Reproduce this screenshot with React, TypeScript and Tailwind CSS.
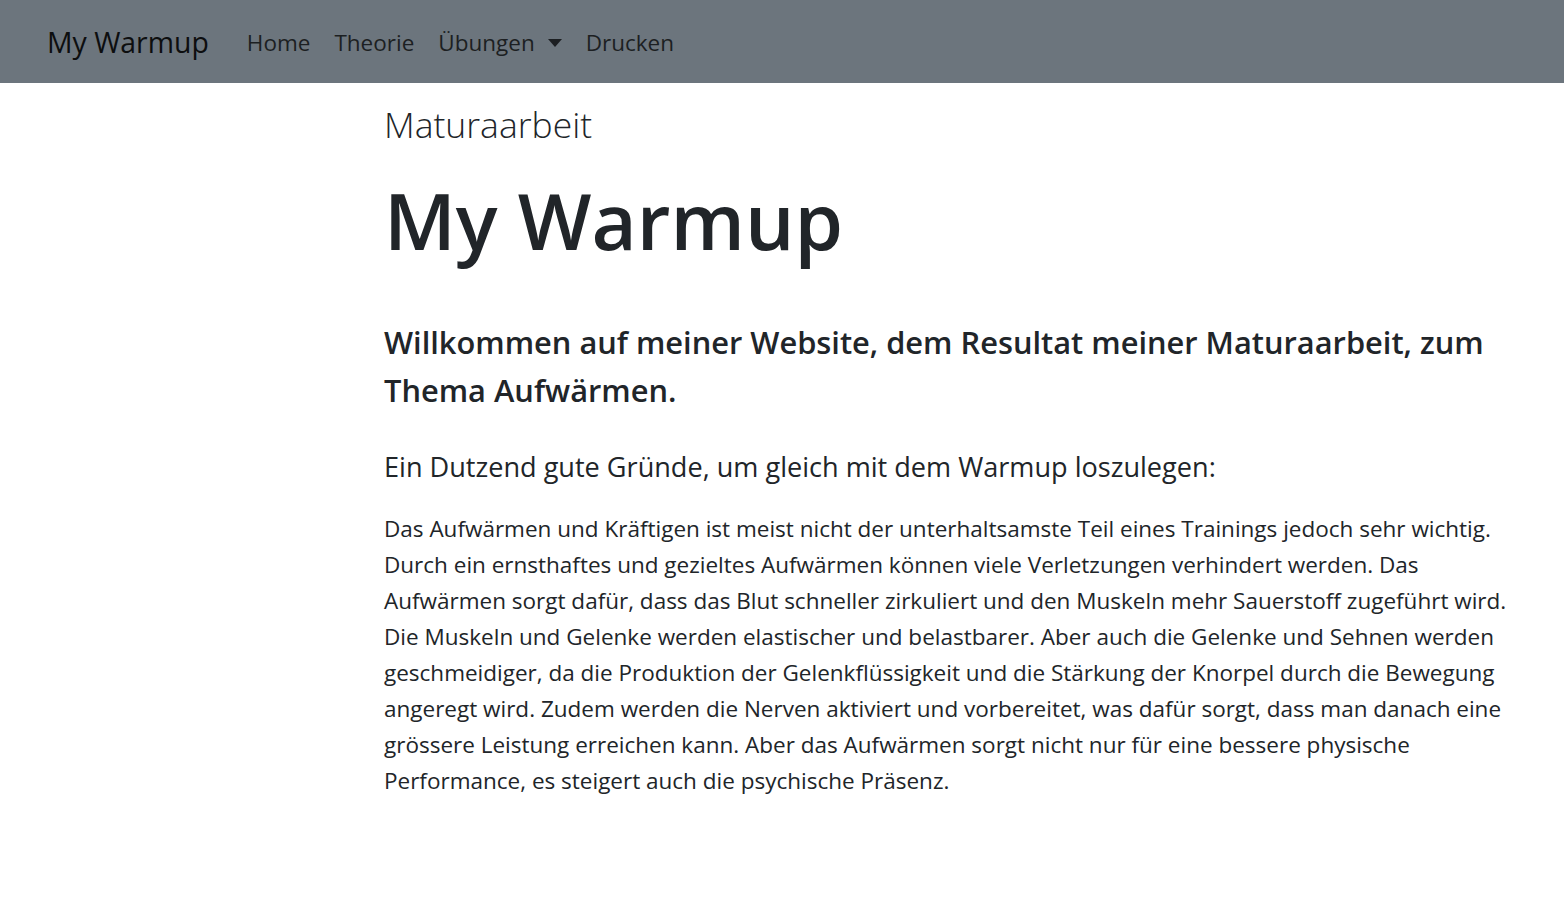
export default function App() {
  return (
    <div className="min-h-[906px] bg-white text-[#212529] font-['Open_Sans',sans-serif]">
      <nav className="flex h-[83px] items-center bg-[#6c757d] pl-[47px]">
        <a href="#" className="mr-[26px] mt-[2px] text-[28.4px] leading-none text-[#0d0e0f]">
          My Warmup
        </a>
        <ul className="mt-[2px] flex items-center text-[22.5px] text-[#1c1f22]">
          <li className="px-3">Home</li>
          <li className="px-3">Theorie</li>
          <li className="flex items-center px-3">
            Übungen
            <span className="ml-[13px] inline-block h-0 w-0 border-x-[7px] border-t-[8px] border-x-transparent border-t-[#1c1f22]" />
          </li>
          <li className="px-3">Drucken</li>
        </ul>
      </nav>

      <main className="whitespace-nowrap pl-[384px] pr-[18px]">
        <h3 className="mt-[19px] text-[35.5px] font-light leading-tight">Maturaarbeit</h3>
        <h1 className="mt-[26px] text-[78px] font-semibold leading-tight">My Warmup</h1>
        <h4 className="mt-[48px] text-[30.8px] font-semibold leading-[48px]">
          Willkommen auf meiner Website, dem Resultat meiner Maturaarbeit, zum
          <br />
          Thema Aufwärmen.
        </h4>
        <p className="mt-[30px] text-[27.1px] leading-[45px]">
          Ein Dutzend gute Gründe, um gleich mit dem Warmup loszulegen:
        </p>
        <p className="mt-[22px] text-[22.5px] leading-[36px]">
          Das Aufwärmen und Kräftigen ist meist nicht der unterhaltsamste Teil eines Trainings jedoch sehr wichtig.
          <br />
          Durch ein ernsthaftes und gezieltes Aufwärmen können viele Verletzungen verhindert werden. Das
          <br />
          Aufwärmen sorgt dafür, dass das Blut schneller zirkuliert und den Muskeln mehr Sauerstoff zugeführt wird.
          <br />
          Die Muskeln und Gelenke werden elastischer und belastbarer. Aber auch die Gelenke und Sehnen werden
          <br />
          geschmeidiger, da die Produktion der Gelenkflüssigkeit und die Stärkung der Knorpel durch die Bewegung
          <br />
          angeregt wird. Zudem werden die Nerven aktiviert und vorbereitet, was dafür sorgt, dass man danach eine
          <br />
          grössere Leistung erreichen kann. Aber das Aufwärmen sorgt nicht nur für eine bessere physische
          <br />
          Performance, es steigert auch die psychische Präsenz.
        </p>
      </main>
    </div>
  );
}
